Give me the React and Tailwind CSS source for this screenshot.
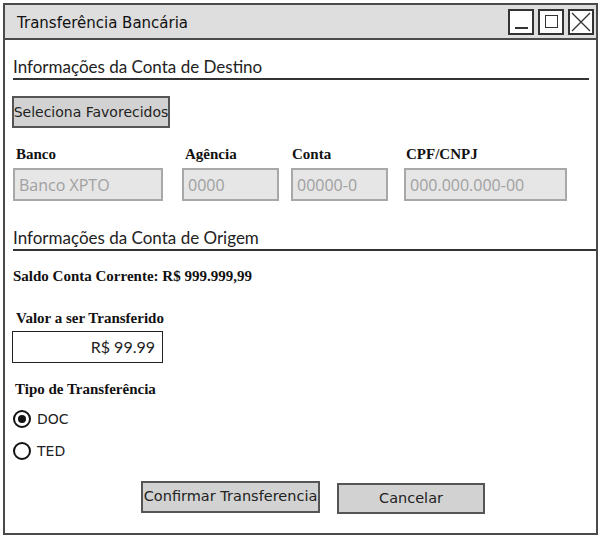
import React from "react";

const comic = { fontFamily: '"DejaVu Sans", sans-serif' };
const serif = { fontFamily: '"Liberation Serif", serif' };
const lato = { fontFamily: "Lato, sans-serif" };

export default function App() {
  return (
    <div className="w-[604px] h-[556px] bg-white pt-[3px] pl-[3px]">
      <div className="w-[595px] h-[532px] border-2 border-[#4a4a4a] flex flex-col">
        {/* Title bar */}
        <div className="h-[35px] bg-[#dedede] border-b-2 border-[#4a4a4a] flex items-center pl-[12px] pr-[2px]">
          <div className="mt-[3px] text-[15px] text-[#111] flex-1 whitespace-nowrap" style={comic}>
            Transferência Bancária
          </div>
          <div className="flex gap-[4px] items-center">
            <div className="w-[26px] h-[26px] border-2 border-[#333] bg-white flex items-end justify-center pb-[4px]">
              <div className="w-[13px] h-[1.5px] bg-[#333]" />
            </div>
            <div className="w-[26px] h-[26px] border-2 border-[#333] bg-white flex items-center justify-center">
              <div className="w-[13px] h-[13px] border-[1.5px] border-[#333]" />
            </div>
            <div className="w-[26px] h-[26px] border-2 border-[#333] bg-white flex items-center justify-center">
              <svg width="20" height="20" viewBox="0 0 20 20">
                <path d="M1 1 L19 19 M19 1 L1 19" stroke="#333" strokeWidth="1.3" />
              </svg>
            </div>
          </div>
        </div>

        {/* Content */}
        <div className="flex flex-col pl-[8px]">
          <div
            className="mt-[17px] mr-[7px] h-[23px] border-b-2 border-[#333] text-[17px] leading-[20px] text-[#222] whitespace-nowrap"
            style={lato}
          >
            Informações da Conta de Destino
          </div>

          <div
            className="mt-[16px] ml-[-1px] w-[158px] h-[32px] bg-[#d2d2d2] border-2 border-[#555] flex items-center justify-center text-[14px] text-[#222] whitespace-nowrap"
            style={comic}
          >
            Seleciona Favorecidos
          </div>

          <div className="flex mt-[18px]" style={serif}>
            <Field label="Banco" value="Banco XPTO" w="w-[150px]" lw="w-[169px]" labelPad="pl-[3px]" />
            <Field label="Agência" value="0000" w="w-[97px]" lw="w-[109px]" labelPad="pl-[3px]" />
            <Field label="Conta" value="00000-0" w="w-[97px]" lw="w-[113px]" labelPad="pl-[1px]" />
            <Field label="CPF/CNPJ" value="000.000.000-00" w="w-[163px]" lw="w-[170px]" labelPad="pl-[2px]" />
          </div>

          <div
            className="mt-[27px] h-[23px] border-b-2 border-[#333] text-[17px] leading-[20px] text-[#222] whitespace-nowrap"
            style={lato}
          >
            Informações da Conta de Origem
          </div>

          <div className="mt-[17px] text-[15px] font-bold leading-[17px] text-[#111]" style={serif}>
            Saldo Conta Corrente: R$ 999.999,99
          </div>

          <div className="mt-[25px] pl-[3px] text-[15px] font-bold leading-[17px] text-[#111]" style={serif}>
            Valor a ser Transferido
          </div>
          <div
            className="mt-[4px] ml-[-1px] w-[151px] h-[32px] border-[1.5px] border-[#222] bg-white flex items-center justify-end pr-[7px] text-[16px] text-[#222]"
            style={lato}
          >
            R$ 99.99
          </div>

          <div className="mt-[18px] pl-[2px] text-[15px] font-bold leading-[17px] text-[#111]" style={serif}>
            Tipo de Transferência
          </div>

          <div className="mt-[12px] flex items-center gap-[6px] h-[18px]">
            <div className="w-[18px] h-[18px] rounded-full border-2 border-[#111] flex items-center justify-center">
              <div className="w-[8px] h-[8px] rounded-full bg-[#111]" />
            </div>
            <span className="text-[14px] text-[#222]" style={comic}>
              DOC
            </span>
          </div>
          <div className="mt-[14px] flex items-center gap-[6px] h-[18px]">
            <div className="w-[18px] h-[18px] rounded-full border-2 border-[#111]" />
            <span className="text-[14px] text-[#222]" style={comic}>
              TED
            </span>
          </div>

          <div className="mt-[21px] flex items-start">
            <div
              className="ml-[128px] w-[179px] h-[32px] bg-[#d2d2d2] border-2 border-[#555] flex items-center justify-center text-[14.5px] text-[#222] whitespace-nowrap"
              style={comic}
            >
              Confirmar Transferencia
            </div>
            <div
              className="ml-[17px] mt-[2px] w-[148px] h-[31px] bg-[#d2d2d2] border-2 border-[#555] flex items-center justify-center text-[14.5px] text-[#222]"
              style={comic}
            >
              Cancelar
            </div>
          </div>
        </div>
      </div>
    </div>
  );
}

function Field({ label, value, w, lw, labelPad }) {
  return (
    <div className={`flex flex-col ${lw}`}>
      <div className={`text-[15px] font-bold leading-[17px] text-[#111] ${labelPad}`}>{label}</div>
      <div
        className={`mt-[5px] ${w} h-[33px] bg-[#e6e6e6] border-2 border-[#a8a8a8] flex items-center pl-[4px] text-[16px] text-[#a0a0a0] whitespace-nowrap`}
        style={{ fontFamily: '"Open Sans", sans-serif' }}
      >
        {value}
      </div>
    </div>
  );
}
